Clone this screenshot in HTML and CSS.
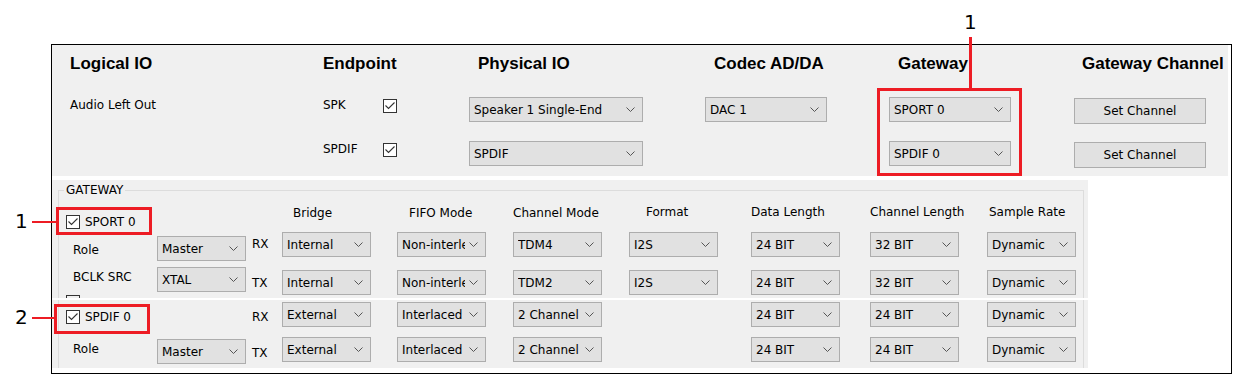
FILE: index.html
```html
<!DOCTYPE html>
<html lang="en">
<head>
  <meta charset="UTF-8">
  <title>Audio Route - Gateway</title>
  <link rel="stylesheet" href="styles.css">
</head>
<body>
  <div class="figure">
    <div class="dialog">

      <div class="io-panel">
        <div class="hdr">Logical IO</div>
        <div class="hdr">Endpoint</div>
        <div class="hdr indent">Physical IO</div>
        <div class="hdr indent">Codec AD/DA</div>
        <div class="hdr indent">Gateway</div>
        <div class="hdr indent-s">Gateway Channel</div>

        <div class="cell-label">Audio Left Out</div>
        <div class="endpoint">
          <span class="ep-name">SPK</span>
          <span class="check"><svg viewBox="0 0 12 12"><path d="M1.5 5.5 L4.5 8.5 L10.5 2.5"/></svg></span>
        </div>
        <div class="combo wide"><span>Speaker 1 Single-End</span><svg class="chev" viewBox="0 0 9 5"><path d="M0.5 0.5 L4.5 4.5 L8.5 0.5"/></svg></div>
        <div class="combo mid"><span>DAC 1</span><svg class="chev" viewBox="0 0 9 5"><path d="M0.5 0.5 L4.5 4.5 L8.5 0.5"/></svg></div>
        <div class="combo mid"><span>SPORT 0</span><svg class="chev" viewBox="0 0 9 5"><path d="M0.5 0.5 L4.5 4.5 L8.5 0.5"/></svg></div>
        <button class="btn">Set Channel</button>

        <div></div>
        <div class="endpoint">
          <span class="ep-name">SPDIF</span>
          <span class="check"><svg viewBox="0 0 12 12"><path d="M1.5 5.5 L4.5 8.5 L10.5 2.5"/></svg></span>
        </div>
        <div class="combo wide"><span>SPDIF</span><svg class="chev" viewBox="0 0 9 5"><path d="M0.5 0.5 L4.5 4.5 L8.5 0.5"/></svg></div>
        <div></div>
        <div class="combo mid"><span>SPDIF 0</span><svg class="chev" viewBox="0 0 9 5"><path d="M0.5 0.5 L4.5 4.5 L8.5 0.5"/></svg></div>
        <button class="btn">Set Channel</button>
      </div>

      <div class="gw-panel">
        <fieldset class="gw-group">
          <legend>GATEWAY</legend>

          <div class="gw-grid sport">
            <!-- header row -->
            <label class="gw-check"><span class="check"><svg viewBox="0 0 12 12"><path d="M1.5 5.5 L4.5 8.5 L10.5 2.5"/></svg></span>SPORT 0</label>
            <div class="col-hdr c-bridge">Bridge</div>
            <div class="col-hdr c-fifo">FIFO Mode</div>
            <div class="col-hdr c-chan">Channel Mode</div>
            <div class="col-hdr c-format">Format</div>
            <div class="col-hdr c-dlen">Data Length</div>
            <div class="col-hdr c-clen">Channel Length</div>
            <div class="col-hdr c-rate">Sample Rate</div>

            <!-- RX row -->
            <div class="side-label role">Role</div>
            <div class="combo gw role-combo"><span>Master</span><svg class="chev" viewBox="0 0 9 5"><path d="M0.5 0.5 L4.5 4.5 L8.5 0.5"/></svg></div>
            <div class="dir rx">RX</div>
            <div class="combo gw"><span>Internal</span><svg class="chev" viewBox="0 0 9 5"><path d="M0.5 0.5 L4.5 4.5 L8.5 0.5"/></svg></div>
            <div class="combo gw"><span>Non-interleaved</span><svg class="chev" viewBox="0 0 9 5"><path d="M0.5 0.5 L4.5 4.5 L8.5 0.5"/></svg></div>
            <div class="combo gw"><span>TDM4</span><svg class="chev" viewBox="0 0 9 5"><path d="M0.5 0.5 L4.5 4.5 L8.5 0.5"/></svg></div>
            <div class="combo gw"><span>I2S</span><svg class="chev" viewBox="0 0 9 5"><path d="M0.5 0.5 L4.5 4.5 L8.5 0.5"/></svg></div>
            <div class="combo gw"><span>24 BIT</span><svg class="chev" viewBox="0 0 9 5"><path d="M0.5 0.5 L4.5 4.5 L8.5 0.5"/></svg></div>
            <div class="combo gw"><span>32 BIT</span><svg class="chev" viewBox="0 0 9 5"><path d="M0.5 0.5 L4.5 4.5 L8.5 0.5"/></svg></div>
            <div class="combo gw"><span>Dynamic</span><svg class="chev" viewBox="0 0 9 5"><path d="M0.5 0.5 L4.5 4.5 L8.5 0.5"/></svg></div>

            <!-- TX row -->
            <div class="side-stack">
              <div class="side-label bclk">BCLK SRC</div>
              <div class="cut-box"></div>
            </div>
            <div class="combo gw xtal-combo"><span>XTAL</span><svg class="chev" viewBox="0 0 9 5"><path d="M0.5 0.5 L4.5 4.5 L8.5 0.5"/></svg></div>
            <div class="dir tx">TX</div>
            <div class="combo gw"><span>Internal</span><svg class="chev" viewBox="0 0 9 5"><path d="M0.5 0.5 L4.5 4.5 L8.5 0.5"/></svg></div>
            <div class="combo gw"><span>Non-interleaved</span><svg class="chev" viewBox="0 0 9 5"><path d="M0.5 0.5 L4.5 4.5 L8.5 0.5"/></svg></div>
            <div class="combo gw"><span>TDM2</span><svg class="chev" viewBox="0 0 9 5"><path d="M0.5 0.5 L4.5 4.5 L8.5 0.5"/></svg></div>
            <div class="combo gw"><span>I2S</span><svg class="chev" viewBox="0 0 9 5"><path d="M0.5 0.5 L4.5 4.5 L8.5 0.5"/></svg></div>
            <div class="combo gw"><span>24 BIT</span><svg class="chev" viewBox="0 0 9 5"><path d="M0.5 0.5 L4.5 4.5 L8.5 0.5"/></svg></div>
            <div class="combo gw"><span>32 BIT</span><svg class="chev" viewBox="0 0 9 5"><path d="M0.5 0.5 L4.5 4.5 L8.5 0.5"/></svg></div>
            <div class="combo gw"><span>Dynamic</span><svg class="chev" viewBox="0 0 9 5"><path d="M0.5 0.5 L4.5 4.5 L8.5 0.5"/></svg></div>
          </div>

          <div class="seam"></div>

          <div class="gw-grid spdif">
            <!-- RX row -->
            <label class="gw-check"><span class="check"><svg viewBox="0 0 12 12"><path d="M1.5 5.5 L4.5 8.5 L10.5 2.5"/></svg></span>SPDIF 0</label>
            <div class="dir rx">RX</div>
            <div class="combo gw"><span>External</span><svg class="chev" viewBox="0 0 9 5"><path d="M0.5 0.5 L4.5 4.5 L8.5 0.5"/></svg></div>
            <div class="combo gw"><span>Interlaced</span><svg class="chev" viewBox="0 0 9 5"><path d="M0.5 0.5 L4.5 4.5 L8.5 0.5"/></svg></div>
            <div class="combo gw"><span>2 Channel</span><svg class="chev" viewBox="0 0 9 5"><path d="M0.5 0.5 L4.5 4.5 L8.5 0.5"/></svg></div>
            <div></div>
            <div class="combo gw"><span>24 BIT</span><svg class="chev" viewBox="0 0 9 5"><path d="M0.5 0.5 L4.5 4.5 L8.5 0.5"/></svg></div>
            <div class="combo gw"><span>24 BIT</span><svg class="chev" viewBox="0 0 9 5"><path d="M0.5 0.5 L4.5 4.5 L8.5 0.5"/></svg></div>
            <div class="combo gw"><span>Dynamic</span><svg class="chev" viewBox="0 0 9 5"><path d="M0.5 0.5 L4.5 4.5 L8.5 0.5"/></svg></div>

            <!-- TX row -->
            <div class="side-label role">Role</div>
            <div class="combo gw role-combo"><span>Master</span><svg class="chev" viewBox="0 0 9 5"><path d="M0.5 0.5 L4.5 4.5 L8.5 0.5"/></svg></div>
            <div class="dir tx">TX</div>
            <div class="combo gw"><span>External</span><svg class="chev" viewBox="0 0 9 5"><path d="M0.5 0.5 L4.5 4.5 L8.5 0.5"/></svg></div>
            <div class="combo gw"><span>Interlaced</span><svg class="chev" viewBox="0 0 9 5"><path d="M0.5 0.5 L4.5 4.5 L8.5 0.5"/></svg></div>
            <div class="combo gw"><span>2 Channel</span><svg class="chev" viewBox="0 0 9 5"><path d="M0.5 0.5 L4.5 4.5 L8.5 0.5"/></svg></div>
            <div></div>
            <div class="combo gw"><span>24 BIT</span><svg class="chev" viewBox="0 0 9 5"><path d="M0.5 0.5 L4.5 4.5 L8.5 0.5"/></svg></div>
            <div class="combo gw"><span>24 BIT</span><svg class="chev" viewBox="0 0 9 5"><path d="M0.5 0.5 L4.5 4.5 L8.5 0.5"/></svg></div>
            <div class="combo gw"><span>Dynamic</span><svg class="chev" viewBox="0 0 9 5"><path d="M0.5 0.5 L4.5 4.5 L8.5 0.5"/></svg></div>
          </div>
        </fieldset>
      </div>
    </div>

    <!-- callouts drawn over the screenshot -->
    <div class="callout-box box-gateway"></div>
    <div class="callout-vline"></div>
    <div class="callout-num num-top">1</div>

    <div class="callout-box box-sport"></div>
    <div class="callout-hline line-sport"></div>
    <div class="callout-num num-sport">1</div>

    <div class="callout-box box-spdif"></div>
    <div class="callout-hline line-spdif"></div>
    <div class="callout-num num-spdif">2</div>
  </div>
</body>
</html>
```

FILE: styles.css
```css
body {
  margin: 0;
  background: #fff;
  font-family: "DejaVu Sans", sans-serif;
  font-size: 12px;
  color: #000;
}

.figure {
  position: relative;
  width: 1236px;
  height: 376px;
  padding: 44px 0 0 51px;
  box-sizing: border-box;
}

.dialog {
  width: 1181px;
  height: 330px;
  border: 1px solid #000;
  box-sizing: border-box;
  background: #fff;
}

/* ---------- top: routing table ---------- */

.io-panel {
  display: grid;
  grid-template-columns: 253px 146px 236px 184px 185px 1fr;
  grid-template-rows: 26px 25px 25px;
  row-gap: 19px;
  align-items: start;
  height: 131px;
  margin-right: 3px;
  padding: 7px 0 0 18px;
  box-sizing: border-box;
  background: #f0f0f0;
}

.hdr {
  font-family: "Liberation Sans", Arial, sans-serif;
  font-weight: bold;
  font-size: 17px;
  line-height: 24px;
  white-space: nowrap;
}

.hdr.indent {
  padding-left: 9px;
}

.hdr.indent-s {
  padding-left: 8px;
}

.cell-label {
  line-height: 14px;
  margin-top: 1px;
}

.endpoint {
  display: flex;
  align-items: flex-start;
}

.ep-name {
  width: 60px;
  line-height: 14px;
  margin-top: 1px;
}

.check {
  display: inline-flex;
  width: 14px;
  height: 14px;
  border: 1px solid #333;
  box-sizing: border-box;
  background: #fff;
  flex: none;
}

.check svg {
  width: 12px;
  height: 12px;
  fill: none;
  stroke: #333;
  stroke-width: 1.1;
}

.endpoint .check {
  margin-top: 2px;
}

.combo {
  display: flex;
  align-items: center;
  height: 25px;
  padding: 0 7px 0 4px;
  border: 1px solid #adadad;
  box-sizing: border-box;
  background: #e1e1e1;
  white-space: nowrap;
}

.combo span {
  flex: 1;
  overflow: hidden;
}

.chev {
  flex: none;
  width: 9px;
  height: 5px;
  margin-left: 4px;
  fill: none;
  stroke: #555;
  stroke-width: 1;
}

.combo.wide {
  width: 174px;
}

.combo.mid {
  width: 122px;
}

.btn {
  width: 132px;
  height: 26px;
  margin-top: 1px;
  border: 1px solid #adadad;
  background: #e1e1e1;
  font: 12px "DejaVu Sans", sans-serif;
  color: #000;
  padding: 0;
}

/* ---------- bottom: gateway group ---------- */

.gw-panel {
  width: 1036px;
  height: 188px;
  margin-top: 4px;
  background: #f0f0f0;
  overflow: hidden;
}

.gw-group {
  margin: 3px 4px 0 6px;
  padding: 0;
  min-width: 0;
  border: 1px solid #dcdcdc;
  border-bottom: none;
}

.gw-group legend {
  margin-left: 5px;
  padding: 0 2px;
  line-height: 14px;
}

.gw-grid {
  display: grid;
  grid-template-columns: 91px 89px 36px 115px 116px 116px 122px 119px 117px 89px;
  align-items: start;
  padding-left: 7px;
}

.gw-grid.sport {
  grid-template-rows: 26px 38px 28px;
  margin-top: 9px;
}

.gw-grid.spdif {
  grid-template-rows: 35px 31px;
  margin-top: 2px;
}

.seam {
  height: 2px;
  margin: 0 -8px 0 -7px;
  background: #fff;
}

.gw-check {
  grid-column: 1 / span 2;
  display: flex;
  align-items: center;
  gap: 5px;
  line-height: 14px;
}

.sport .gw-check {
  margin-top: 9px;
}

.spdif .gw-check {
  margin-top: 8px;
}

.col-hdr {
  line-height: 14px;
  white-space: nowrap;
}

.c-bridge { grid-column: 4; padding-left: 11px; }
.c-fifo   { padding-left: 12px; }
.c-format { padding-left: 17px; margin-top: -1px; }
.c-rate   { padding-left: 2px; margin-top: -1px; }
.c-dlen, .c-clen { margin-top: -1px; }

.side-label {
  padding-left: 7px;
  line-height: 14px;
}

.sport .role {
  margin-top: 11px;
}

.spdif .role {
  margin-top: 5px;
}

.side-stack {
  display: flex;
  flex-direction: column;
  justify-content: space-between;
  height: 28px;
}

.cut-box {
  width: 14px;
  height: 3px;
  border: 1px solid #333;
  border-bottom: none;
  box-sizing: border-box;
}

.combo.gw {
  width: 89px;
}

.sport .role-combo {
  margin-top: 4px;
}

.spdif .role-combo {
  margin-top: 2px;
}

.xtal-combo {
  margin-top: -3px;
}

.dir {
  padding-left: 6px;
  line-height: 14px;
}

.sport .dir.rx { margin-top: 5px; }
.sport .dir.tx { margin-top: 6px; }
.spdif .dir.rx { grid-column: 3; margin-top: 8px; }
.spdif .dir.tx { margin-top: 9px; }

/* ---------- red callouts ---------- */

.callout-box {
  position: absolute;
  border: 3px solid #ed1c24;
  box-sizing: border-box;
}

.box-gateway {
  left: 877px;
  top: 88px;
  width: 145px;
  height: 88px;
}

.box-sport {
  left: 56px;
  top: 207px;
  width: 96px;
  height: 28px;
}

.box-spdif {
  left: 54px;
  top: 304px;
  width: 96px;
  height: 30px;
}

.callout-vline {
  position: absolute;
  left: 969px;
  top: 37px;
  width: 3px;
  height: 52px;
  background: #ed1c24;
}

.callout-hline {
  position: absolute;
  left: 32px;
  width: 24px;
  height: 2px;
  background: #ed1c24;
}

.line-sport {
  top: 221px;
}

.line-spdif {
  top: 317px;
  width: 22px;
}

.callout-num {
  position: absolute;
  font-family: "DejaVu Sans", sans-serif;
  font-size: 20px;
  line-height: 20px;
}

.num-top {
  left: 964px;
  top: 12px;
}

.num-sport {
  left: 15px;
  top: 211px;
}

.num-spdif {
  left: 15px;
  top: 307px;
}
```
